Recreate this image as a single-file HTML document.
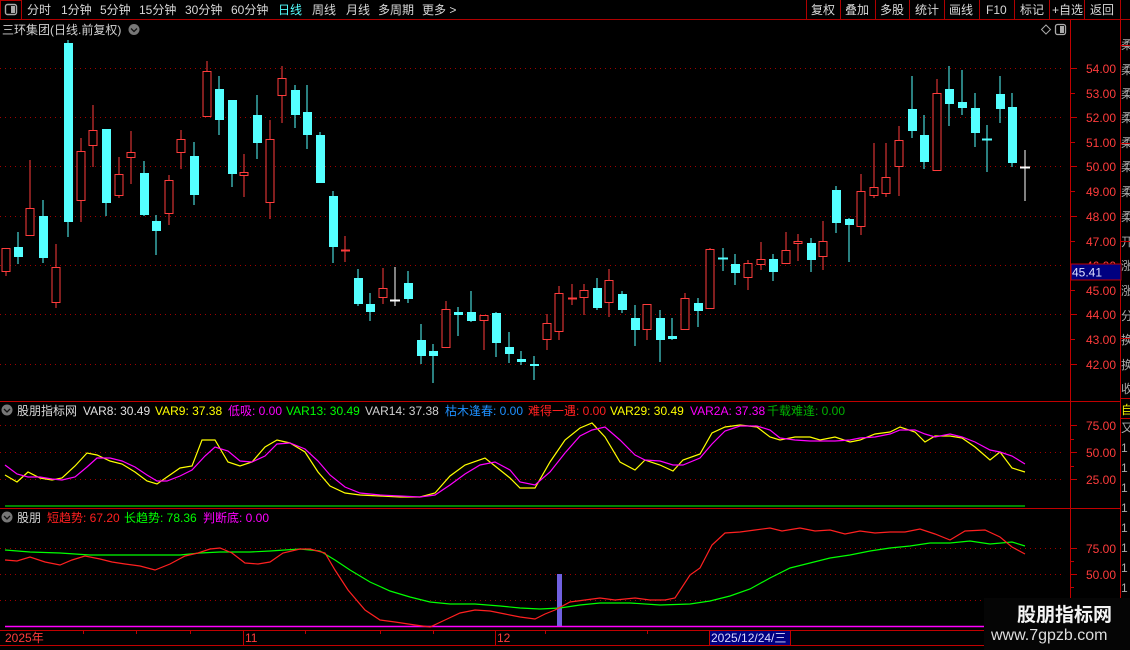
<!DOCTYPE html>
<html><head><meta charset="utf-8"><style>
html,body{margin:0;padding:0;background:#000;width:1130px;height:650px;overflow:hidden}
svg{display:block}
text{font-family:"Liberation Sans","Noto Sans CJK SC",sans-serif}
</style></head><body>
<svg width="1130" height="650" xmlns="http://www.w3.org/2000/svg">
<rect width="1130" height="650" fill="#000"/>
<!-- toolbar -->
<line x1="0" y1="19.5" x2="1130" y2="19.5" stroke="#b00000"/>
<rect x="0.5" y="0.5" width="21" height="19" fill="none" stroke="#b00000"/>
<rect x="5.5" y="4.5" width="11" height="10" rx="2" fill="none" stroke="#aaa" stroke-width="1.4"/>
<rect x="11" y="6" width="4" height="7" fill="#aaa"/>
<g font-size="12" fill="#d8d8d8">
<text x="27" y="14">分时</text><text x="61" y="14">1分钟</text><text x="100" y="14">5分钟</text><text x="139" y="14">15分钟</text><text x="185" y="14">30分钟</text><text x="231" y="14">60分钟</text><text x="278" y="14" fill="#54ffff">日线</text><text x="312" y="14">周线</text><text x="346" y="14">月线</text><text x="378" y="14">多周期</text><text x="422" y="14">更多 &gt;</text>
<text x="811" y="14">复权</text><text x="845" y="14">叠加</text><text x="880" y="14">多股</text><text x="915" y="14">统计</text><text x="949" y="14">画线</text><text x="986" y="14">F10</text><text x="1020" y="14">标记</text><text x="1052" y="14">+自选</text><text x="1090" y="14">返回</text>
</g>
<g stroke="#b00000"><line x1="806.5" y1="0" x2="806.5" y2="19"/><line x1="840.5" y1="0" x2="840.5" y2="19"/><line x1="875.5" y1="0" x2="875.5" y2="19"/><line x1="909.5" y1="0" x2="909.5" y2="19"/><line x1="944.5" y1="0" x2="944.5" y2="19"/><line x1="979.5" y1="0" x2="979.5" y2="19"/><line x1="1014.5" y1="0" x2="1014.5" y2="19"/><line x1="1049.5" y1="0" x2="1049.5" y2="19"/><line x1="1084.5" y1="0" x2="1084.5" y2="19"/><line x1="1120.5" y1="0" x2="1120.5" y2="19"/></g>
<!-- title -->
<text x="2" y="34" font-size="12" fill="#d0d0d0">三环集团(日线.前复权)</text>
<circle cx="134" cy="29.5" r="5.5" fill="#777"/><path d="M131 28.5l3 3 3-3" stroke="#111" fill="none" stroke-width="1.3"/>
<path d="M1046 25l4.5 4.5-4.5 4.5-4.5-4.5z" fill="none" stroke="#aaa"/>
<rect x="1055.5" y="24.5" width="10" height="10" rx="2" fill="none" stroke="#aaa" stroke-width="1.3"/><rect x="1060" y="26" width="4" height="7" fill="#aaa"/>
<!-- axes frame -->
<g stroke="#c00000"><line x1="1070.5" y1="20" x2="1070.5" y2="630"/><line x1="1120.5" y1="20" x2="1120.5" y2="650"/><line x1="0" y1="401.5" x2="1120" y2="401.5"/><line x1="0" y1="508.5" x2="1120" y2="508.5"/><line x1="0" y1="630.5" x2="1070" y2="630.5"/><line x1="0" y1="645.5" x2="985" y2="645.5"/></g>
<!-- grid dotted -->
<g stroke="#a00000" stroke-dasharray="1,4">
<line x1="0" y1="68.5" x2="1062" y2="68.5"/><line x1="0" y1="117.5" x2="1062" y2="117.5"/><line x1="0" y1="166.5" x2="1062" y2="166.5"/><line x1="0" y1="216.5" x2="1062" y2="216.5"/><line x1="0" y1="265.5" x2="1062" y2="265.5"/><line x1="0" y1="314.5" x2="1062" y2="314.5"/><line x1="0" y1="364.5" x2="1062" y2="364.5"/>
<line x1="0" y1="425.5" x2="1062" y2="425.5"/><line x1="0" y1="452.5" x2="1062" y2="452.5"/><line x1="0" y1="479.5" x2="1062" y2="479.5"/>
<line x1="0" y1="548.5" x2="1062" y2="548.5"/><line x1="0" y1="574.5" x2="1062" y2="574.5"/><line x1="0" y1="600.5" x2="985" y2="600.5"/>
</g>
<!-- axis ticks -->
<g stroke="#c00000"><line x1="1071" y1="68.5" x2="1077" y2="68.5"/><line x1="1071" y1="93.5" x2="1075" y2="93.5"/><line x1="1071" y1="117.5" x2="1077" y2="117.5"/><line x1="1071" y1="142.5" x2="1075" y2="142.5"/><line x1="1071" y1="166.5" x2="1077" y2="166.5"/><line x1="1071" y1="191.5" x2="1075" y2="191.5"/><line x1="1071" y1="216.5" x2="1077" y2="216.5"/><line x1="1071" y1="241.5" x2="1075" y2="241.5"/><line x1="1071" y1="290.5" x2="1075" y2="290.5"/><line x1="1071" y1="314.5" x2="1077" y2="314.5"/><line x1="1071" y1="339.5" x2="1075" y2="339.5"/><line x1="1071" y1="364.5" x2="1077" y2="364.5"/>
<line x1="1071" y1="425.5" x2="1077" y2="425.5"/><line x1="1071" y1="439.5" x2="1074" y2="439.5"/><line x1="1071" y1="452.5" x2="1077" y2="452.5"/><line x1="1071" y1="466.5" x2="1074" y2="466.5"/><line x1="1071" y1="479.5" x2="1077" y2="479.5"/><line x1="1071" y1="548.5" x2="1077" y2="548.5"/><line x1="1071" y1="561.5" x2="1074" y2="561.5"/><line x1="1071" y1="574.5" x2="1077" y2="574.5"/><line x1="1071" y1="587.5" x2="1074" y2="587.5"/></g>
<g font-size="12" fill="#ff3c3c">
<text x="1086" y="73">54.00</text><text x="1086" y="98">53.00</text><text x="1086" y="122">52.00</text><text x="1086" y="147">51.00</text><text x="1086" y="171">50.00</text><text x="1086" y="196">49.00</text><text x="1086" y="221">48.00</text><text x="1086" y="246">47.00</text><text x="1086" y="270">46.00</text><text x="1086" y="295">45.00</text><text x="1086" y="319">44.00</text><text x="1086" y="344">43.00</text><text x="1086" y="369">42.00</text>
<text x="1086" y="430">75.00</text><text x="1086" y="457">50.00</text><text x="1086" y="484">25.00</text>
<text x="1086" y="553">75.00</text><text x="1086" y="579">50.00</text>
</g>
<rect x="1071" y="264" width="50" height="16" fill="#000080" stroke="#c00000"/>
<text x="1072" y="276.5" font-size="12" fill="#e0e0ff">45.41</text>
<!-- right column -->
<g font-size="12" fill="#aaa"><text x="1121" y="49">柔</text><text x="1121" y="74">柔</text><text x="1121" y="98">柔</text><text x="1121" y="122">柔</text><text x="1121" y="147">柔</text><text x="1121" y="171">柔</text><text x="1121" y="196">柔</text><text x="1121" y="221">柔</text><text x="1121" y="246">开</text><text x="1121" y="270">涨</text><text x="1121" y="295">涨</text><text x="1121" y="320">分</text><text x="1121" y="344">换</text><text x="1121" y="369">换</text><text x="1121" y="393">收</text><text x="1121" y="414" fill="#ee0">自</text><text x="1121" y="432">又</text><text x="1121" y="452">1</text><text x="1121" y="472">1</text><text x="1121" y="492">1</text><text x="1121" y="512">1</text><text x="1121" y="532">1</text><text x="1121" y="552">1</text><text x="1121" y="572">1</text><text x="1121" y="592">1</text></g>
<g stroke="#c00000"><line x1="1120" y1="45.5" x2="1130" y2="45.5"/><line x1="1120" y1="143.5" x2="1130" y2="143.5"/><line x1="1120" y1="241.5" x2="1130" y2="241.5"/><line x1="1120" y1="338.5" x2="1130" y2="338.5"/><line x1="1120" y1="398.5" x2="1130" y2="398.5"/><line x1="1120" y1="418.5" x2="1130" y2="418.5"/></g>

<!-- candles: red hollow -->
<g stroke="#ff3c3c" stroke-width="1">
<path d="M6 248V276M30 160V236M56 244V308M81 138V222M93 105V167M119 157V198M131 131V184M169 175V225M181 130V169M207 61V117M244 154V197M270 120V219M282 66V123M345 236V262M383 268V304M446 301V348M484 315V350M547 314V350M559 286V340M572 284V305M584 284V315M609 269V317M647 304V340M685 293V330M710 248V309M748 260V290M761 242V270M786 232V264M798 234V261M823 221V270M861 174V235M874 143V198M886 143V197M899 126V196M937 79V171"/>
<path d="M341 250.5H350M568 298.5H577" stroke-width="2"/>
<g fill="#000">
<rect x="2" y="248.5" width="8" height="23"/><rect x="26" y="208.5" width="8" height="27"/><rect x="52" y="267.5" width="8" height="35"/><rect x="77" y="151.5" width="8" height="49"/><rect x="89" y="130.5" width="8" height="15"/><rect x="115" y="174.5" width="8" height="21"/><rect x="127" y="152.5" width="8" height="5"/><rect x="165" y="180.5" width="8" height="33"/><rect x="177" y="139.5" width="8" height="13"/><rect x="203" y="71.5" width="8" height="45"/><rect x="240" y="172.5" width="8" height="3"/><rect x="266" y="139.5" width="8" height="63"/><rect x="278" y="78.5" width="8" height="17"/><rect x="379" y="288.5" width="8" height="9"/><rect x="442" y="309.5" width="8" height="38"/><rect x="480" y="315.5" width="8" height="5"/><rect x="543" y="323.5" width="8" height="16"/><rect x="555" y="293.5" width="8" height="38"/><rect x="580" y="290.5" width="8" height="7"/><rect x="605" y="280.5" width="8" height="22"/><rect x="643" y="304.5" width="8" height="25"/><rect x="681" y="298.5" width="8" height="31"/><rect x="706" y="249.5" width="8" height="59"/><rect x="744" y="263.5" width="8" height="14"/><rect x="757" y="259.5" width="8" height="5"/><rect x="782" y="250.5" width="8" height="13"/><rect x="794" y="241.5" width="8" height="2"/><rect x="819" y="241.5" width="8" height="15"/><rect x="857" y="191.5" width="8" height="35"/><rect x="870" y="187.5" width="8" height="8"/><rect x="882" y="177.5" width="8" height="16"/><rect x="895" y="140.5" width="8" height="26"/><rect x="933" y="93.5" width="8" height="77"/>
</g></g>
<!-- cyan -->
<g stroke="#54ffff" fill="#54ffff">
<path d="M18 232V264M43 200V263M68 40V237M106 129V216M144 161V216M156 215V255M194 142V205M219 76V135M232 100V187M257 95V159M295 85V128M307 85V149M320 132V183M333 191V263M358 269V306M370 293V321M408 271V303M421 324V364M433 344V383M458 307V336M471 291V322M496 312V357M509 332V363M521 351V365M534 356V380M597 278V310M622 291V313M635 305V346M660 310V362M672 318V340M698 298V327M723 248V271M735 254V285M773 254V281M811 238V272M836 186V233M849 218V262M912 76V138M924 115V169M949 66V126M962 70V115M975 93V147M987 125V172M1000 76V123M1012 93V167"/>
<path d="M718 258.5H728M982 139.5H992" stroke-width="2"/>
<g stroke="none">
<rect x="14" y="247" width="9" height="10"/><rect x="39" y="216" width="9" height="42"/><rect x="64" y="43" width="9" height="179"/><rect x="102" y="129" width="9" height="74"/><rect x="140" y="173" width="9" height="42"/><rect x="152" y="221" width="9" height="10"/><rect x="190" y="156" width="9" height="39"/><rect x="215" y="89" width="9" height="31"/><rect x="228" y="100" width="9" height="74"/><rect x="253" y="115" width="9" height="28"/><rect x="291" y="90" width="9" height="25"/><rect x="303" y="112" width="9" height="23"/><rect x="316" y="135" width="9" height="48"/><rect x="329" y="196" width="9" height="51"/><rect x="354" y="278" width="9" height="26"/><rect x="366" y="304" width="9" height="8"/><rect x="404" y="283" width="9" height="16"/><rect x="417" y="340" width="9" height="16"/><rect x="429" y="351" width="9" height="5"/><rect x="454" y="312" width="9" height="3"/><rect x="467" y="312" width="9" height="9"/><rect x="492" y="313" width="9" height="30"/><rect x="505" y="347" width="9" height="7"/><rect x="517" y="359" width="9" height="3"/><rect x="530" y="364" width="9" height="2"/><rect x="593" y="288" width="9" height="20"/><rect x="618" y="294" width="9" height="16"/><rect x="631" y="318" width="9" height="12"/><rect x="656" y="318" width="9" height="22"/><rect x="668" y="336" width="9" height="3"/><rect x="694" y="303" width="9" height="8"/><rect x="731" y="264" width="9" height="9"/><rect x="769" y="259" width="9" height="13"/><rect x="807" y="243" width="9" height="17"/><rect x="832" y="190" width="9" height="33"/><rect x="845" y="219" width="9" height="6"/><rect x="908" y="109" width="9" height="22"/><rect x="920" y="135" width="9" height="27"/><rect x="945" y="89" width="9" height="15"/><rect x="958" y="102" width="9" height="6"/><rect x="971" y="108" width="9" height="25"/><rect x="996" y="94" width="9" height="15"/><rect x="1008" y="107" width="9" height="56"/>
</g></g>
<!-- white crosses -->
<g stroke="#fff"><path d="M395 267V306M1025 150V201"/><path d="M390 300.5H400M1020 167.5H1030" stroke-width="2"/></g>

<!-- pane1 header -->
<circle cx="7" cy="410" r="5.5" fill="#777"/><path d="M4 409l3 3 3-3" stroke="#111" fill="none" stroke-width="1.3"/>
<g font-size="12"><text x="17" y="415" fill="#d8d8d8">股朋指标网</text><text x="83" y="415" fill="#e0e0e0">VAR8: 30.49</text><text x="155" y="415" fill="#ffff00">VAR9: 37.38</text><text x="228" y="415" fill="#ff00ff">低吸: 0.00</text><text x="286" y="415" fill="#00ff00">VAR13: 30.49</text><text x="365" y="415" fill="#d0d0d0">VAR14: 37.38</text><text x="445" y="415" fill="#1e90ff">枯木逢春: 0.00</text><text x="528" y="415" fill="#ff2020">难得一遇: 0.00</text><text x="610" y="415" fill="#ffff00">VAR29: 30.49</text><text x="690" y="415" fill="#ff00ff">VAR2A: 37.38</text><text x="767" y="415" fill="#00b000">千载难逢: 0.00</text></g>
<line x1="5" y1="506" x2="1025" y2="506" stroke="#00b000" stroke-width="1.5"/>
<polyline fill="none" stroke="#ffff00" stroke-width="1.2" points="5,475 17,482 28,472 40,478 52,480 62,478 75,466 87,453 97,455 110,461 122,464 135,472 147,481 157,484 167,477 180,468 192,466 202,440 215,440 228,462 240,466 252,462 265,447 277,440 290,443 305,452 318,472 330,486 345,493 360,495 380,496 400,497 420,497 435,493 450,476 465,465 485,458 495,466 510,478 520,488 535,488 550,462 565,440 580,428 592,423 605,437 620,462 635,470 645,460 660,465 673,471 683,460 700,454 712,433 725,427 740,425 757,427 770,437 780,440 795,437 810,437 820,440 835,437 850,442 860,440 875,434 890,432 900,427 915,432 925,442 935,436 950,436 962,438 975,447 990,460 1000,452 1012,468 1025,472"/>
<polyline fill="none" stroke="#ff00ff" stroke-width="1.2" points="5,465 17,474 28,477 40,477 52,479 62,480 75,477 87,467 97,458 110,458 122,461 135,467 147,475 157,481 167,481 180,476 192,470 205,456 215,447 228,451 240,461 252,462 265,456 277,444 290,443 305,449 318,461 330,475 345,487 360,493 380,495 400,496 420,497 435,495 450,485 465,474 480,465 495,462 510,470 520,482 535,485 550,472 565,453 580,436 592,430 605,427 620,440 635,455 645,460 660,461 673,465 683,465 700,458 712,444 725,431 740,426 757,426 770,430 780,438 795,440 810,441 820,441 835,441 850,440 860,438 875,437 890,434 900,430 915,430 925,434 935,437 950,434 962,437 975,442 990,450 1000,452 1012,456 1025,464"/>

<!-- pane2 header -->
<circle cx="7" cy="517" r="5.5" fill="#777"/><path d="M4 516l3 3 3-3" stroke="#111" fill="none" stroke-width="1.3"/>
<g font-size="12"><text x="17" y="522" fill="#d8d8d8">股朋</text><text x="47" y="522" fill="#ff2020">短趋势: 67.20</text><text x="124" y="522" fill="#00ff00">长趋势: 78.36</text><text x="203" y="522" fill="#ff00ff">判断底: 0.00</text></g>
<rect x="557" y="574" width="5" height="52" fill="#7060e0"/>
<line x1="5" y1="626.5" x2="1025" y2="626.5" stroke="#ff00ff" stroke-width="1.5"/>
<polyline fill="none" stroke="#00ff00" stroke-width="1.2" points="5,550 30,552 60,553 90,555 120,555 150,555 180,555 200,553 220,552 250,552 270,551 300,549 320,551 335,560 350,570 370,582 390,591 410,597 430,602 450,604 475,604 500,606 520,608 540,609 560,608 580,605 600,603 630,603 660,605 690,604 710,601 730,596 750,589 770,578 790,568 810,563 830,558 850,555 870,551 890,548 910,546 930,543 950,543 970,541 990,544 1012,542 1025,546"/>
<polyline fill="none" stroke="#ff2020" stroke-width="1.2" points="5,560 17,561 30,557 45,562 60,565 72,560 85,556 100,559 112,562 125,564 140,566 155,570 170,564 185,556 198,553 210,549 220,548 232,553 245,563 258,564 270,562 283,553 300,549 310,549 325,553 335,570 348,590 365,610 380,620 395,622 415,625 430,627 445,620 460,613 475,610 490,611 505,614 520,617 535,619 545,614 555,610 570,602 585,600 600,598 615,600 635,598 650,600 665,600 675,598 690,575 700,568 712,545 725,533 740,532 755,530 770,528 782,531 800,528 815,531 830,530 845,534 860,531 875,533 890,532 905,532 920,529 935,534 950,540 965,531 985,530 1000,537 1012,547 1025,554"/>

<!-- date axis -->
<g stroke="#c00000"><line x1="243.5" y1="630" x2="243.5" y2="645"/><line x1="495.5" y1="630" x2="495.5" y2="645"/><line x1="83.5" y1="630" x2="83.5" y2="634"/><line x1="136.5" y1="630" x2="136.5" y2="634"/><line x1="190.5" y1="630" x2="190.5" y2="634"/><line x1="305.5" y1="630" x2="305.5" y2="634"/><line x1="380.5" y1="630" x2="380.5" y2="634"/><line x1="433.5" y1="630" x2="433.5" y2="634"/><line x1="545.5" y1="630" x2="545.5" y2="634"/><line x1="647.5" y1="630" x2="647.5" y2="634"/></g>
<g font-size="12" fill="#ff3c3c"><text x="5" y="642">2025年</text><text x="245" y="642">11</text><text x="497" y="642">12</text></g>
<rect x="709.5" y="630.5" width="81" height="15" fill="#000080" stroke="#c00000"/>
<text x="711" y="642" font-size="12" fill="#d8d8ff">2025/12/24/三</text>
<!-- watermark -->
<rect x="984" y="598" width="146" height="52" fill="#050505"/>
<text x="1017" y="621" font-size="19" font-weight="bold" fill="#f4f4f4">股朋指标网</text>
<text x="991" y="640" font-size="16" fill="#dddddd">www.7gpzb.com</text>
</svg>
</body></html>
